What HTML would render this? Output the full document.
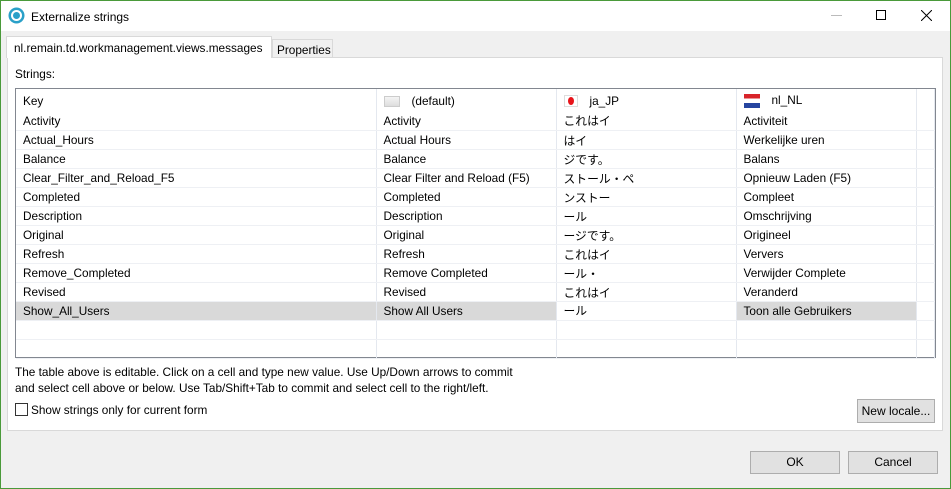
<!DOCTYPE html>
<html><head><meta charset="utf-8"><style>
*{box-sizing:border-box;margin:0;padding:0}
body{width:951px;height:489px;overflow:hidden;background:#f0f0f0;font-family:"Liberation Sans","Noto Sans CJK JP",sans-serif;font-size:11.8px;color:#000;position:relative}
.win{position:absolute;left:0;top:0;width:951px;height:489px;border:1px solid #4a9a3a;border-top-width:1px}
.title{position:absolute;left:1px;top:1px;width:949px;height:30px;background:#fff}
.abs{position:absolute}
table{border-collapse:collapse;table-layout:fixed;position:absolute;left:16px;top:89px}
td{height:19px;border-right:1px solid #e4e8ef;border-bottom:1px solid #eef0f4;padding:1px 0 0 7px;white-space:nowrap;overflow:hidden;font-size:11.8px;vertical-align:middle}
tr.h td{height:22px;border-bottom:none}
tr.sel td.s{background:#d9d9d9}
.btn{position:absolute;background:#e1e1e1;border:1px solid #adadad;text-align:center;font-size:12px}
</style></head><body>
<div class="win"></div>
<div class="title"></div>
<svg class="abs" style="left:8px;top:7px" width="17" height="17" viewBox="0 0 17 17"><circle cx="8.5" cy="8.5" r="8" fill="#2aa0c8"/><circle cx="8.5" cy="8.5" r="4.5" fill="none" stroke="#fff" stroke-width="2"/><circle cx="8.5" cy="8.5" r="2" fill="#2aa0c8"/></svg>
<div class="abs" style="left:31px;top:10px;font-size:12px">Externalize strings</div>
<div class="abs" style="left:831px;top:15px;width:11px;height:1px;background:#bbb"></div>
<div class="abs" style="left:876px;top:10px;width:10px;height:10px;border:1px solid #000"></div>
<svg class="abs" style="left:921px;top:10px" width="11" height="11"><path d="M0 0L11 11M11 0L0 11" stroke="#000" stroke-width="1"/></svg>
<div class="abs" style="left:7px;top:57px;width:936px;height:374px;background:#fff;border:1px solid #d9d9d9"></div>
<div class="abs" style="left:6px;top:36px;width:266px;height:22px;background:#fff;border:1px solid #d9d9d9;border-bottom:none;padding:4px 0 0 7px">nl.remain.td.workmanagement.views.messages</div>
<div class="abs" style="left:272px;top:39px;width:61px;height:18px;background:#f0f0f0;border:1px solid #d9d9d9;border-bottom:none;padding:3px 0 0 4px">Properties</div>
<div class="abs" style="left:15px;top:67px">Strings:</div>
<div class="abs" style="left:15px;top:88px;width:921px;height:270px;border:1px solid #828790;background:#fff"></div>
<table>
<colgroup><col style="width:360px"><col style="width:180px"><col style="width:180px"><col style="width:180px"><col style="width:18px"></colgroup>
<tr class="h"><td>Key</td><td><span style="display:inline-block;width:16px;height:11px;background:linear-gradient(#f4f4f4,#ddd);border:1px solid #ccc;vertical-align:middle;margin-right:12px"></span>(default)</td><td><span style="display:inline-block;width:14px;height:12px;border:1px solid #ddd;vertical-align:middle;margin-right:12px;position:relative;background:#fff"><span style="position:absolute;left:3px;top:1px;width:6px;height:8px;border-radius:50%;background:#e8141a"></span></span>ja_JP</td><td><span style="display:inline-block;width:16px;height:14px;background:linear-gradient(#d8242a 0 33%,#fff 33% 66%,#2645a0 66%);vertical-align:middle;margin-right:12px"></span>nl_NL</td><td></td></tr>
<tr><td>Activity</td><td>Activity</td><td>これはイ</td><td>Activiteit</td><td></td></tr>
<tr><td>Actual_Hours</td><td>Actual Hours</td><td>はイ</td><td>Werkelijke uren</td><td></td></tr>
<tr><td>Balance</td><td>Balance</td><td>ジです。</td><td>Balans</td><td></td></tr>
<tr><td>Clear_Filter_and_Reload_F5</td><td>Clear Filter and Reload (F5)</td><td>ストール・ペ</td><td>Opnieuw Laden (F5)</td><td></td></tr>
<tr><td>Completed</td><td>Completed</td><td>ンストー</td><td>Compleet</td><td></td></tr>
<tr><td>Description</td><td>Description</td><td>ール</td><td>Omschrijving</td><td></td></tr>
<tr><td>Original</td><td>Original</td><td>ージです。</td><td>Origineel</td><td></td></tr>
<tr><td>Refresh</td><td>Refresh</td><td>これはイ</td><td>Ververs</td><td></td></tr>
<tr><td>Remove_Completed</td><td>Remove Completed</td><td>ール・</td><td>Verwijder Complete</td><td></td></tr>
<tr><td>Revised</td><td>Revised</td><td>これはイ</td><td>Veranderd</td><td></td></tr>
<tr class="sel"><td class="s">Show_All_Users</td><td class="s">Show All Users</td><td style="vertical-align:top;padding-top:0">ール</td><td class="s">Toon alle Gebruikers</td><td></td></tr>
<tr><td></td><td></td><td></td><td></td><td></td></tr>
<tr><td style="height:18px"></td><td></td><td></td><td></td><td></td></tr>
</table>
<div class="abs" style="left:15px;top:364px;line-height:16px">The table above is editable. Click on a cell and type new value. Use Up/Down arrows to commit<br>and select cell above or below. Use Tab/Shift+Tab to commit and select cell to the right/left.</div>
<div class="abs" style="left:15px;top:403px;width:13px;height:13px;border:1px solid #333;background:#fff"></div>
<div class="abs" style="left:31px;top:403px">Show strings only for current form</div>
<div class="btn" style="left:857px;top:399px;width:78px;height:24px;line-height:22px">New locale...</div>
<div class="btn" style="left:750px;top:451px;width:90px;height:23px;line-height:21px">OK</div>
<div class="btn" style="left:848px;top:451px;width:90px;height:23px;line-height:21px">Cancel</div>
</body></html>
